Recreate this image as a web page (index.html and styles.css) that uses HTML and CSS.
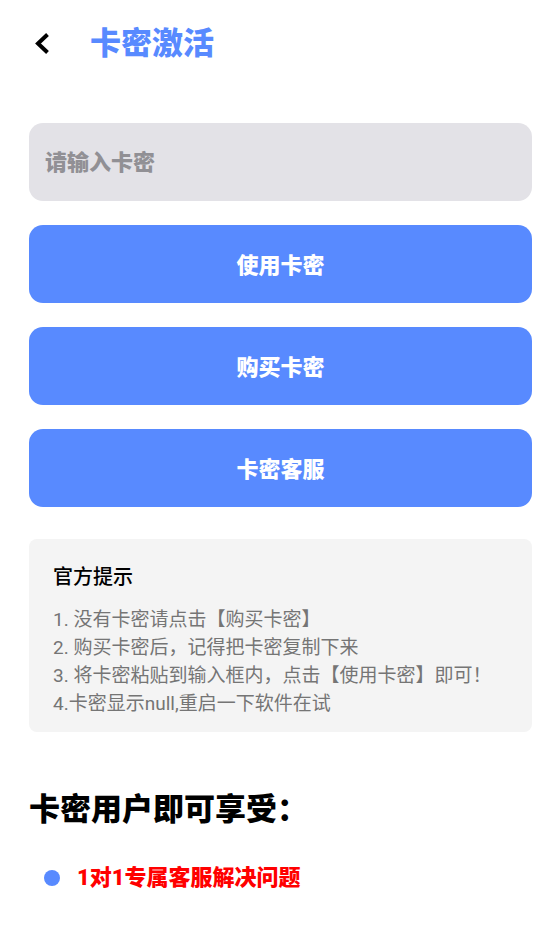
FILE: index.html
```html
<!DOCTYPE html>
<html lang="zh-CN">
<head>
  <meta charset="UTF-8">
  <meta name="viewport" content="width=device-width, initial-scale=1.0">
  <title>卡密激活</title>
  <link rel="stylesheet" href="styles.css">
</head>
<body>
  <header class="header">
    <button class="back" type="button" aria-label="返回">
      <svg width="16" height="24" viewBox="0 0 16 24" fill="none" stroke="#000" stroke-width="4">
        <path d="M13.5 3.5 L4 12.5 L13.5 21.5"/>
      </svg>
    </button>
    <h1>卡密激活</h1>
  </header>

  <main class="container">
    <form class="card-form">
      <input class="field" type="text" placeholder="请输入卡密" aria-label="请输入卡密">
      <button class="btn" type="button">使用卡密</button>
      <button class="btn" type="button">购买卡密</button>
      <button class="btn" type="button">卡密客服</button>
    </form>

    <section class="tips">
      <h2>官方提示</h2>
      <p>1. 没有卡密请点击【购买卡密】</p>
      <p>2. 购买卡密后，记得把卡密复制下来</p>
      <p>3. 将卡密粘贴到输入框内，点击【使用卡密】即可！</p>
      <p>4.卡密显示null,重启一下软件在试</p>
    </section>

    <section class="benefits">
      <h2>卡密用户即可享受：</h2>
      <ul>
        <li>1对1专属客服解决问题</li>
      </ul>
    </section>
  </main>
</body>
</html>
```

FILE: styles.css
```css
* {
  box-sizing: border-box;
}
body {
  margin: 0;
  background: #fff;
  color: #000;
  font-family: Roboto, "Noto Sans CJK SC", sans-serif;
}
h1, h2, p, ul {
  margin: 0;
  padding: 0;
}
.header {
  display: flex;
  align-items: center;
  gap: 40px;
  height: 86px;
  padding: 0 34px;
}
.header h1 {
  padding-bottom: 6px;
  color: #588aff;
  font-size: 31px;
  font-weight: 900;
}
.back {
  display: flex;
  padding: 0;
  border: none;
  background: none;
  cursor: pointer;
}
.container {
  padding: 37px 25px 40px 29px;
}
.card-form {
  display: flex;
  flex-direction: column;
  gap: 24px;
}
.field,
.btn {
  width: 100%;
  height: 78px;
  border: none;
  border-radius: 14px;
  font-family: inherit;
  font-size: 22px;
  font-weight: 900;
}
.field {
  padding: 0 16px;
  background: #e3e2e7;
}
.field::placeholder {
  color: #919095;
  opacity: 1;
}
.btn {
  padding: 0 0 2px;
  background: #588aff;
  color: #fff;
  cursor: pointer;
}
.tips {
  margin-top: 32px;
  padding: 24px 24px 14px;
  border-radius: 8px;
  background: #f4f4f4;
}
.tips h2 {
  margin-bottom: 15px;
  font-size: 20px;
  font-weight: 500;
  line-height: 28px;
}
.tips p {
  color: #757575;
  font-size: 19px;
  line-height: 28px;
}
.benefits {
  margin-top: 56px;
}
.benefits h2 {
  font-size: 31px;
  font-weight: 900;
  line-height: 44px;
}
.benefits ul {
  margin-top: 30px;
  list-style: none;
}
.benefits li {
  display: flex;
  align-items: center;
  gap: 17px;
  padding-left: 15px;
  color: #ff0000;
  font-size: 22px;
  font-weight: 900;
  line-height: 32px;
}
.benefits li::before {
  content: "";
  width: 16px;
  height: 16px;
  border-radius: 50%;
  background: #588aff;
}
```
